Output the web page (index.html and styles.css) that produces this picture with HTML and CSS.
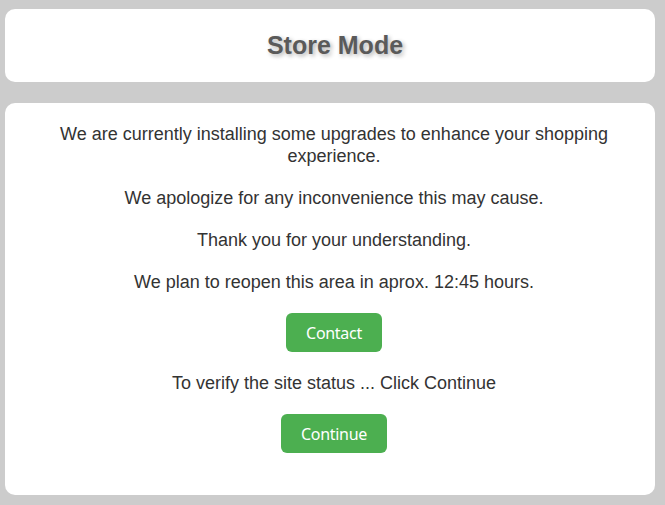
FILE: index.html
```html
<!DOCTYPE html>
<html lang="en">
<head>
    <meta charset="UTF-8">
    <meta name="viewport" content="width=device-width, initial-scale=1.0">
    <title>Store Mode</title>
    <link rel="stylesheet" href="styles.css">
</head>
<body>

    <!-- Cabecalho -->
    <header class="title-box">
        <h1>Store Mode</h1>
    </header>

    <!-- Aviso de manutencao -->
    <main class="notice-box">
        <p>We are currently installing some upgrades to enhance your shopping experience.</p>
        <p>We apologize for any inconvenience this may cause.</p>
        <p>Thank you for your understanding.</p>
        <p>We plan to reopen this area in aprox. 12:45 hours.</p>
        <button class="btn">Contact</button>
        <p>To verify the site status ... Click Continue</p>
        <button class="btn">Continue</button>
    </main>

</body>
</html>
```

FILE: styles.css
```css
* {
    margin: 0;
    padding: 0;
    box-sizing: border-box;
}

body {
    background-color: #cccccc;
    font-family: "Liberation Sans", Arial, Helvetica, sans-serif;
    color: #333333;
    padding: 9px 10px 0 5px;
}

/* Cabecalho */
.title-box {
    background-color: white;
    border-radius: 10px;
    height: 73px;
    padding-left: 10px;
    display: flex;
    align-items: center;
    justify-content: center;
    margin-bottom: 21px;
}

.title-box h1 {
    font-size: 25px;
    font-weight: bold;
    color: #5a5a5a;
    text-shadow: 2px 2px 4px rgba(0, 0, 0, 0.3);
}

/* Caixa principal */
.notice-box {
    background-color: white;
    border-radius: 10px;
    padding: 20px 18px 42px 26px;
    display: flex;
    flex-direction: column;
    align-items: center;
    text-align: center;
}

.notice-box p {
    font-size: 18px;
    line-height: 22px;
    margin-bottom: 20px;
}

.btn {
    background-color: #4caf50;
    border: none;
    color: white;
    font-family: "Noto Sans", "Open Sans", sans-serif;
    font-size: 16px;
    letter-spacing: -0.3px;
    padding: 0 20px;
    height: 39px;
    border-radius: 6px;
    cursor: pointer;
    margin-bottom: 20px;
}

.btn:last-child {
    margin-bottom: 0;
}
```
